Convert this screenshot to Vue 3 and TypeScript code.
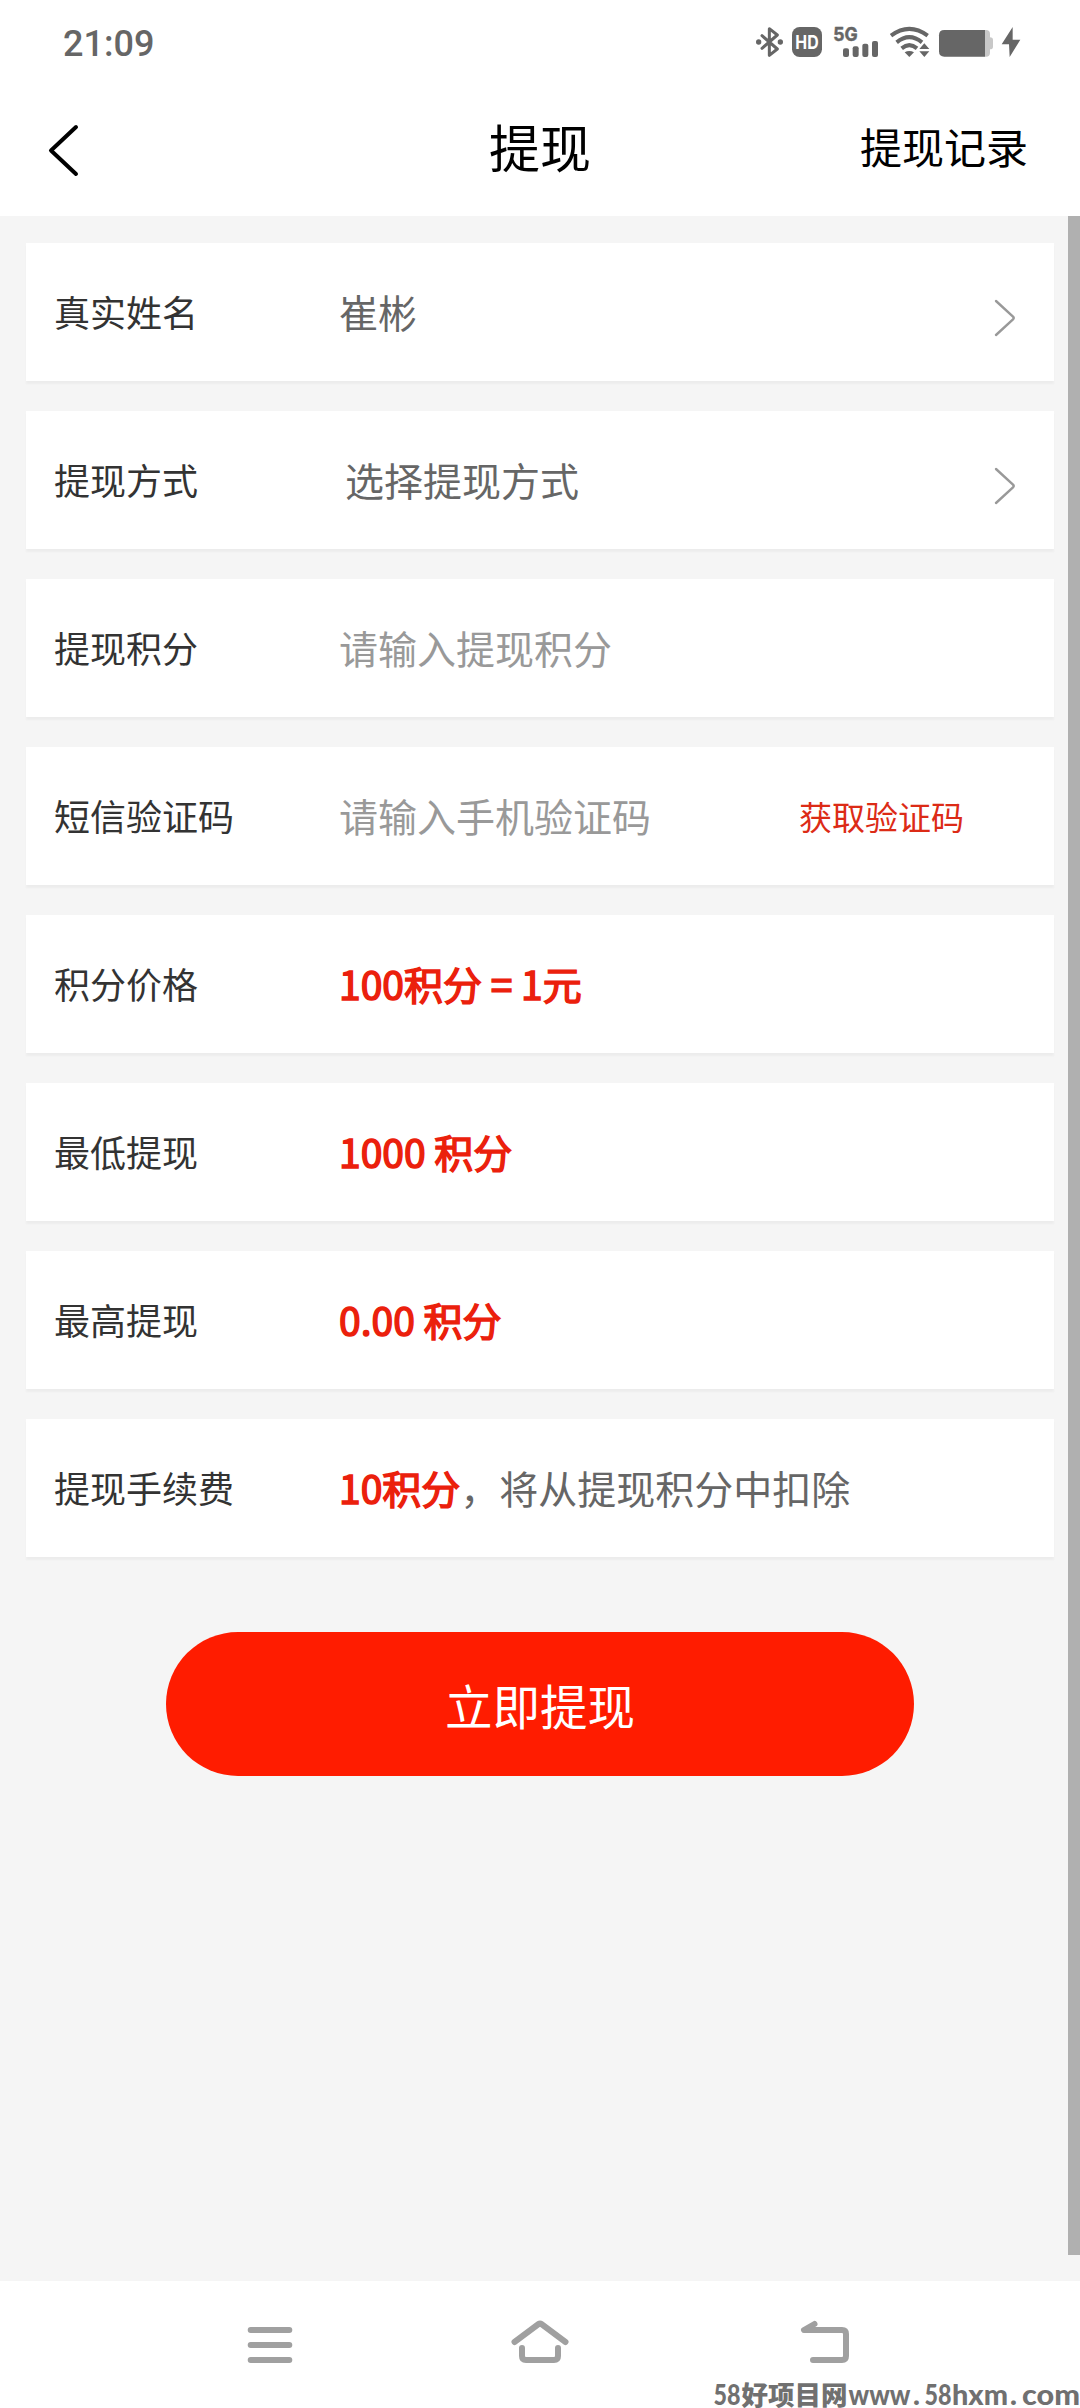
<script setup lang="ts">
interface Row {
  label: string
  value?: string
  strong?: string
  placeholder?: string
  action?: string
  arrow?: boolean
  indent?: boolean
}

const rows: Row[] = [
  { label: '真实姓名', value: '崔彬', arrow: true },
  { label: '提现方式', value: '选择提现方式', arrow: true, indent: true },
  { label: '提现积分', placeholder: '请输入提现积分' },
  { label: '短信验证码', placeholder: '请输入手机验证码', action: '获取验证码' },
  { label: '积分价格', strong: '100积分 = 1元' },
  { label: '最低提现', strong: '1000 积分' },
  { label: '最高提现', strong: '0.00 积分' },
  { label: '提现手续费', strong: '10积分', value: '，将从提现积分中扣除' },
]
</script>

<template>
  <div class="screen">
    <div class="status">
      <span class="time">21:09</span>
      <svg class="status-icons" width="300" height="70" viewBox="0 0 900 210">
        <g fill="none" stroke="#666" stroke-width="9" stroke-linejoin="round" stroke-linecap="round">
          <path d="M66 77 L112 117 L88 136 V56 L112 75 L66 115" />
        </g>
        <circle cx="56" cy="96" r="8" fill="#666" />
        <circle cx="121" cy="96" r="8" fill="#666" />
        <rect x="156" y="51" width="90" height="90" rx="23" fill="#666" />
        <text x="201" y="116" text-anchor="middle" class="hd" textLength="70" lengthAdjust="spacingAndGlyphs">HD</text>
        <text x="280" y="93" class="net" textLength="73" lengthAdjust="spacingAndGlyphs">5G</text>
        <g fill="#666">
          <rect x="309" y="115" width="18" height="26" rx="6" />
          <rect x="338" y="109" width="18" height="32" rx="6" />
          <rect x="367" y="101" width="18" height="40" rx="6" />
          <rect x="396" y="93" width="18" height="48" rx="6" />
        </g>
        <g fill="none" stroke="#666" stroke-width="12">
          <path d="M453 77 Q508 36 563 77" />
          <path d="M470 97 Q508 66 546 97" />
          <path d="M485 115 Q508 96 531 115" />
        </g>
        <path d="M494 127 Q508 119 522 127 L508 141 Z" fill="#666" />
        <path d="M538 117 L553 100 L568 117 Z M538 124 L553 141 L568 124 Z" fill="#666" />
        <path d="M735 60 H738 Q750 60 750 72 V82 Q759 82 759 90 V110 Q759 118 750 118 V128 Q750 140 738 140 H735 Z" fill="#c8c8c8" />
        <path d="M613 60 H735 V140 H613 Q597 140 597 124 V76 Q597 60 613 60 Z" fill="#666" />
        <path d="M818 51 L785 103 H807 L809 141 L841 89 H818 Z" fill="#666" />
      </svg>
    </div>

    <header class="header">
      <div class="side">
        <svg class="back" width="34" height="56" viewBox="0 0 34 56">
          <path d="M31 5 L6 28.500 L31 52" fill="none" stroke="#000" stroke-width="4" stroke-linecap="round" stroke-linejoin="round" />
        </svg>
      </div>
      <h1 class="title">提现</h1>
      <div class="side right">提现记录</div>
    </header>

    <main class="body">
      <div class="content">
        <section v-for="row in rows" :key="row.label" class="card">
          <span class="label">{{ row.label }}</span>
          <span class="field" :class="{ indent: row.indent }"><b v-if="row.strong">{{ row.strong }}</b><span v-if="row.value">{{ row.value }}</span><span v-if="row.placeholder" class="placeholder">{{ row.placeholder }}</span></span>
          <span v-if="row.action" class="action">{{ row.action }}</span>
          <svg v-if="row.arrow" class="arrow" width="24" height="40" viewBox="0 0 24 40">
            <path d="M3 3 L20 18.600 Q21.400 20 20 21.400 L3 37" fill="none" stroke="#999" stroke-width="2.400" stroke-linecap="round" />
          </svg>
        </section>
        <button class="submit" type="button">立即提现</button>
      </div>
      <div class="scrollbar"></div>
    </main>

    <nav class="nav">
      <svg width="80" height="60" viewBox="0 0 80 60">
        <path d="M20.700 15 H59.300 M20.700 30 H59.300 M20.700 45 H59.300" />
      </svg>
      <svg width="80" height="60" viewBox="0 0 80 60">
        <path d="M14.500 27 L38.600 9 Q40 8 41.400 9 L65.500 27 M22 33 V41 Q22 45 26 45 H54 Q58 45 58 41 V33" />
      </svg>
      <svg width="80" height="60" viewBox="0 0 80 60">
        <path d="M44.500 9 L34 15 H72 Q76 15 76 19 V41 Q76 45 72 45 H43" />
      </svg>
    </nav>

    <svg class="watermark" width="370" height="40" viewBox="710 2368 370 40">
      <text x="713.500" y="2405" textLength="27" lengthAdjust="spacingAndGlyphs">58</text>
      <text x="741.500" y="2405" class="cn" textLength="106" lengthAdjust="spacingAndGlyphs">好项目网</text>
      <text x="848.500" y="2405" textLength="62" lengthAdjust="spacingAndGlyphs">www</text>
      <text x="913" y="2405">.</text>
      <text x="924.500" y="2405" textLength="27" lengthAdjust="spacingAndGlyphs">58</text>
      <text x="952" y="2405" textLength="56" lengthAdjust="spacingAndGlyphs">hxm</text>
      <text x="1010" y="2405">.</text>
      <text x="1022" y="2405" textLength="58" lengthAdjust="spacingAndGlyphs">com</text>
    </svg>
  </div>
</template>

<style>
body {
  margin: 0;
}
</style>

<style scoped>
.screen {
  position: relative;
  display: flex;
  flex-direction: column;
  width: 1080px;
  height: 2408px;
  overflow: hidden;
  background: #fff;
  font-family: "Noto Sans CJK SC", sans-serif;
}

.status {
  display: flex;
  justify-content: space-between;
  box-sizing: border-box;
  height: 84px;
  padding: 10px 40px 0 63px;
}

.time {
  color: #666;
  font: 500 36px/68px Roboto, sans-serif;
}

.hd,
.net {
  font-family: Inter, sans-serif;
  font-weight: 700;
}

.hd {
  fill: #fff;
  font-size: 56px;
}

.net {
  fill: #666;
  stroke: #666;
  stroke-width: 1.5px;
  font-size: 57px;
}

.header {
  display: flex;
  align-items: center;
  box-sizing: border-box;
  height: 132px;
  padding: 0 52px 8px 45px;
}

.side {
  display: flex;
  flex: 1;
  align-items: center;
}

.back {
  margin-top: 8px;
}

.right {
  justify-content: flex-end;
  color: #000;
  font-size: 42px;
  line-height: 60px;
}

.title {
  margin: 0 0 0 7px;
  color: #000;
  font-size: 51px;
  font-weight: 400;
  line-height: 74px;
}

.body {
  display: flex;
  height: 2065px;
  background: #f5f5f5;
}

.content {
  display: flex;
  flex: 1;
  flex-direction: column;
  gap: 30px;
  padding: 27px 14px 0 26px;
}

.card {
  display: flex;
  align-items: center;
  box-sizing: border-box;
  height: 138px;
  padding: 0 37px 2px 28px;
  background: #fff;
  box-shadow: 0 3px 2px rgba(0, 0, 0, 0.035);
}

.label {
  width: 285px;
  color: #333;
  font-size: 36px;
}

.field {
  flex: 1;
  color: #666;
  font-size: 39px;
  white-space: nowrap;
}

.indent {
  padding-left: 6px;
}

/* Regular-width glyphs thickened by an outline, as a phone does for a face with no bold cut. */
.field b {
  color: #eb200c;
  font-weight: 400;
  -webkit-text-stroke: 1.5px #eb200c;
}

.placeholder {
  color: #999;
}

.action {
  margin: 2px 53px 0 0;
  color: #dc2b16;
  font-size: 33px;
}

.arrow {
  margin-top: 14px;
}

.submit {
  width: 748px;
  height: 144px;
  margin: 45px 0 0 140px;
  padding: 1px 0 0;
  border: 0;
  border-radius: 72px;
  background: #ff1c00;
  color: #fff;
  font: 400 47.5px "Noto Sans CJK SC", sans-serif;
}

.scrollbar {
  width: 12px;
  height: 2039px;
  background: #b0b0b0;
}

.nav {
  display: flex;
  flex: 1;
  justify-content: space-around;
  padding: 34px 135px 0;
}

.nav path {
  fill: none;
  stroke: #a0a0a0;
  stroke-width: 6;
  stroke-linecap: round;
  stroke-linejoin: round;
}

.watermark {
  position: absolute;
  right: 0;
  bottom: 0;
}

.watermark text {
  fill: #707070;
  font-family: Lato, sans-serif;
  font-size: 29px;
  font-weight: 900;
}

.watermark .cn {
  font-family: "Noto Sans CJK SC", sans-serif;
  font-size: 26px;
}
</style>
